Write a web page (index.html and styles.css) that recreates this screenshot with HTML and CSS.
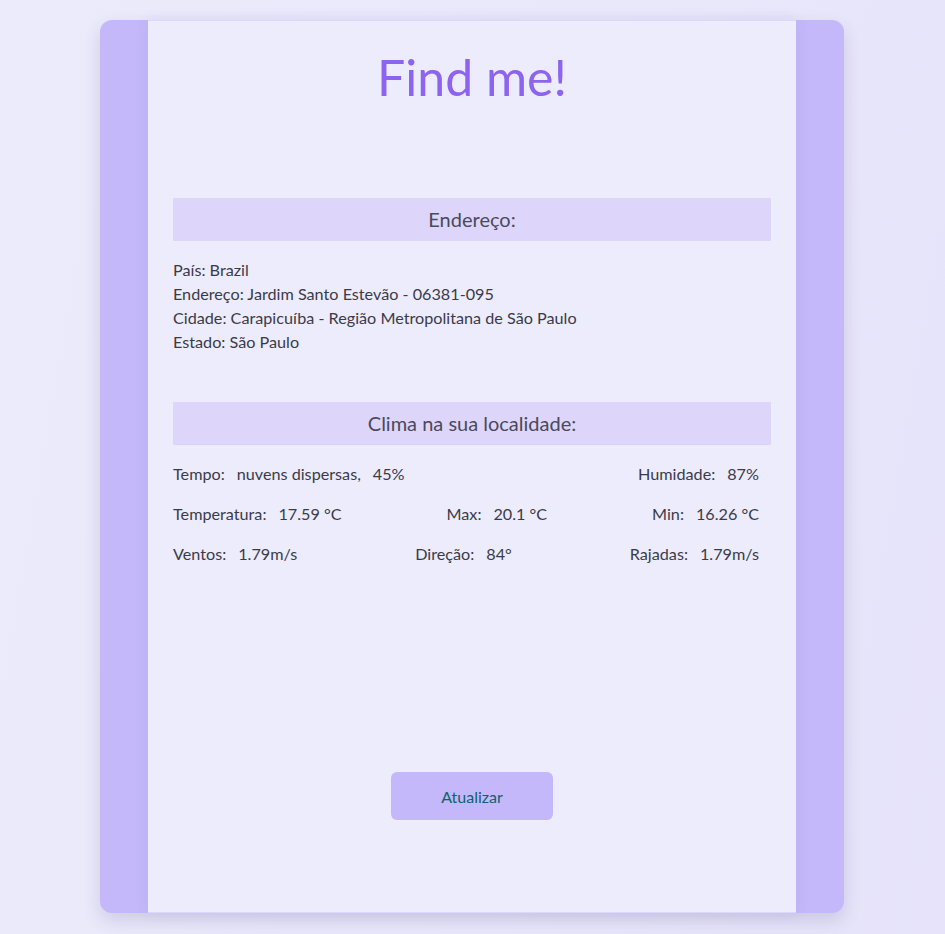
FILE: index.html
```html
<!DOCTYPE html>
<html lang="pt-BR">
<head>
<meta charset="utf-8">
<title>Find me!</title>
<link rel="stylesheet" href="styles.css">
</head>
<body>
<div class="card">
  <div class="side"></div>
  <main class="panel">
    <h1 class="title">Find me!</h1>

    <section class="section address">
      <h2 class="section-head">Endereço:</h2>
      <div class="address-lines">
        <p>País: Brazil</p>
        <p>Endereço: Jardim Santo Estevão - 06381-095</p>
        <p>Cidade: Carapicuíba - Região Metropolitana de São Paulo</p>
        <p>Estado: São Paulo</p>
      </div>
    </section>

    <section class="section weather">
      <h2 class="section-head">Clima na sua localidade:</h2>
      <div class="rows">
        <div class="row">
          <div class="item"><span class="lbl">Tempo:</span><span class="val">nuvens dispersas,</span><span class="val">45%</span></div>
          <div class="item"><span class="lbl">Humidade:</span><span class="val">87%</span></div>
        </div>
        <div class="row">
          <div class="item"><span class="lbl">Temperatura:</span><span class="val">17.59 °C</span></div>
          <div class="item"><span class="lbl">Max:</span><span class="val">20.1 °C</span></div>
          <div class="item"><span class="lbl">Min:</span><span class="val">16.26 °C</span></div>
        </div>
        <div class="row">
          <div class="item"><span class="lbl">Ventos:</span><span class="val">1.79m/s</span></div>
          <div class="item"><span class="lbl">Direção:</span><span class="val">84°</span></div>
          <div class="item"><span class="lbl">Rajadas:</span><span class="val">1.79m/s</span></div>
        </div>
      </div>
    </section>

    <div class="actions">
      <button class="btn" type="button">Atualizar</button>
    </div>
  </main>
  <div class="side"></div>
</div>
</body>
</html>
```

FILE: styles.css
```css
* { box-sizing: border-box; }

html, body { height: 100%; }

body {
  margin: 0;
  padding: 20px 1px 21px 0;
  background: linear-gradient(100deg, #ebebfb 0%, #e9e8fb 60%, #e6e3fa 100%);
  font-family: Lato, "Noto Sans", sans-serif;
  color: #3b3b48;
}

.card {
  width: 744px;
  height: 893px;
  margin: 0 auto;
  display: flex;
  background: #c4b8fa;
  border-radius: 12px;
  box-shadow: 0 8px 18px rgba(60, 50, 110, 0.16);
}

.side {
  width: 48px;
  flex: none;
}

.panel {
  flex: 1;
  background: #ececfd;
  border-top: 1px solid #ddd6fe;
  border-bottom: 1px solid #ddd6fe;
  padding: 0 25px;
  display: flex;
  flex-direction: column;
  box-shadow: 0 0 14px rgba(80, 60, 160, 0.08);
}

.title {
  margin: 24px 0 0;
  text-align: center;
  font-size: 50px;
  line-height: 64px;
  font-weight: 400;
  color: #8d63f2;
}

.section-head {
  margin: 0;
  height: 43px;
  line-height: 43px;
  background: #ddd6fa;
  text-align: center;
  font-size: 20px;
  font-weight: 400;
  color: #4a4a5a;
}

.address { margin-top: 89px; }

.address-lines { margin-top: 17px; }

.address-lines p {
  margin: 0;
  font-size: 16.2px;
  line-height: 24px;
}

.weather { margin-top: 48px; }

.rows {
  margin-top: 17px;
  padding-right: 12px;
  display: flex;
  flex-direction: column;
  gap: 16px;
}

.row {
  display: flex;
  justify-content: space-between;
  font-size: 16.2px;
  line-height: 24px;
}

.item .val { margin-left: 12px; }

.actions {
  margin-top: auto;
  margin-bottom: 92px;
  display: flex;
  justify-content: center;
}

.btn {
  width: 162px;
  height: 48px;
  border: none;
  border-radius: 6px;
  background: #c4b8fa;
  color: #11606e;
  font-family: inherit;
  font-size: 16px;
  cursor: pointer;
}
```
